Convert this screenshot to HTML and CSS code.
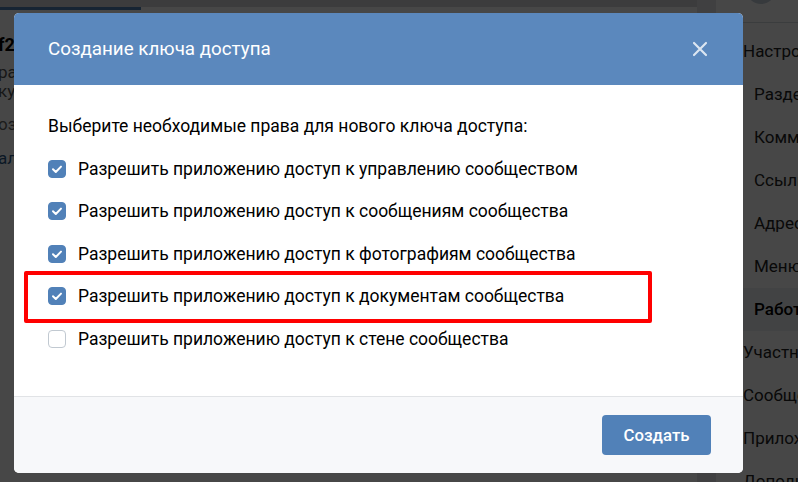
FILE: index.html
```html
<!DOCTYPE html>
<html lang="ru">
<head>
<meta charset="utf-8">
<title>Создание ключа доступа</title>
<link rel="stylesheet" href="styles.css">
</head>
<body>
<div class="page">
  <div class="main">
    <div class="main-top"></div>
    <div class="main-card">
      <div class="tab-line"></div>
      <div class="key-title">f2a6c1</div>
      <div class="key-desc">разрешено: управление, сообщения,<br>куда угодно</div>
      <div class="key-date">оздан 12 марта</div>
      <div class="key-link">алить</div>
    </div>
  </div>
  <div class="side">
    <div class="side-head"><div class="avatar"></div></div>
    <div class="menu">
      <div class="menu-item">Настройки</div>
      <div class="menu-item sub">Разделы</div>
      <div class="menu-item sub">Комментарии</div>
      <div class="menu-item sub">Ссылки</div>
      <div class="menu-item sub">Адреса</div>
      <div class="menu-item sub">Меню</div>
      <div class="menu-item sub active">Работа с API</div>
      <div class="menu-item">Участники</div>
      <div class="menu-item">Сообщения</div>
      <div class="menu-item">Приложения</div>
      <div class="menu-item">Дополнительно</div>
    </div>
  </div>
</div>
<div class="overlay"></div>
<div class="modal">
  <div class="modal-header">
    <div class="modal-title">Создание ключа доступа</div>
    <svg class="close" width="16" height="16" viewBox="0 0 16 16"><path d="M2 2 L14 14 M14 2 L2 14" stroke="currentColor" stroke-width="2.2" stroke-linecap="round"/></svg>
  </div>
  <div class="modal-body">
    <div class="intro">Выберите необходимые права для нового ключа доступа:</div>
    <div class="row"><span class="cb on"><svg width="18" height="18" viewBox="0 0 18 18"><path d="M5 9.3 L7.8 12 L13 6.6" fill="none" stroke="#fff" stroke-width="2" stroke-linecap="round" stroke-linejoin="round"/></svg></span>Разрешить приложению доступ к управлению сообществом</div>
    <div class="row"><span class="cb on"><svg width="18" height="18" viewBox="0 0 18 18"><path d="M5 9.3 L7.8 12 L13 6.6" fill="none" stroke="#fff" stroke-width="2" stroke-linecap="round" stroke-linejoin="round"/></svg></span>Разрешить приложению доступ к сообщениям сообщества</div>
    <div class="row"><span class="cb on"><svg width="18" height="18" viewBox="0 0 18 18"><path d="M5 9.3 L7.8 12 L13 6.6" fill="none" stroke="#fff" stroke-width="2" stroke-linecap="round" stroke-linejoin="round"/></svg></span>Разрешить приложению доступ к фотографиям сообщества</div>
    <div class="row marked"><span class="cb on"><svg width="18" height="18" viewBox="0 0 18 18"><path d="M5 9.3 L7.8 12 L13 6.6" fill="none" stroke="#fff" stroke-width="2" stroke-linecap="round" stroke-linejoin="round"/></svg></span>Разрешить приложению доступ к документам сообщества<span class="highlight"></span></div>
    <div class="row"><span class="cb"></span>Разрешить приложению доступ к стене сообщества</div>
  </div>
  <div class="modal-footer">
    <button class="btn">Создать</button>
  </div>
</div>
</body>
</html>
```
FILE: styles.css
```css
* { box-sizing: border-box; }
html, body { margin: 0; padding: 0; }
body {
  width: 798px;
  height: 482px;
  overflow: hidden;
  position: relative;
  font-family: Roboto, "Noto Sans", "Liberation Sans", sans-serif;
  background: #e4e6ea;
}
.page {
  display: flex;
  gap: 19px;
  height: 482px;
}
.main {
  width: 697px;
  flex: none;
  display: flex;
  flex-direction: column;
  overflow: hidden;
}
.main-top { height: 7px; background: #d6d8dc; }
.main-card {
  flex: 1;
  background: #fff;
  margin-left: -2px;
}
.tab-line { width: 143px; height: 3px; background: #5181b8; }
.key-title {
  margin-top: 25px;
  font-size: 18px;
  font-weight: 700;
  color: #000;
  line-height: 20px;
}
.key-desc {
  margin-top: 8px;
  font-size: 17px;
  line-height: 19px;
  color: #555;
}
.key-date {
  margin-top: 13px;
  font-size: 17px;
  line-height: 20px;
  color: #666;
}
.key-link {
  margin-top: 14px;
  font-size: 17px;
  line-height: 20px;
  color: #2a5885;
}
.side {
  flex: 1;
  min-width: 0;
  overflow: hidden;
  background: #fff;
}
.side-head {
  height: 23px;
  border-bottom: 1px solid #d3d9de;
  position: relative;
}
.avatar {
  position: absolute;
  left: 30px;
  top: -26px;
  width: 30px;
  height: 30px;
  border-radius: 50%;
  background: #c5d0db;
}
.menu { padding-top: 7px; }
.menu-item {
  height: 43px;
  line-height: 43px;
  font-size: 17px;
  color: #222;
  padding-left: 27px;
  white-space: nowrap;
}
.menu-item.sub { padding-left: 38px; }
.menu-item.active { background: #eef0f3; color: #000; font-weight: 500; }
.overlay {
  position: absolute;
  inset: 0;
  background: rgba(0, 0, 0, 0.72);
}
.modal {
  position: absolute;
  left: 14px;
  top: 13px;
  width: 729px;
  height: 460px;
  background: #fff;
  border-radius: 5px;
  overflow: hidden;
  display: flex;
  flex-direction: column;
}
.modal-header {
  height: 72px;
  background: #5b88bd;
  display: flex;
  align-items: center;
  justify-content: space-between;
  padding: 0 35px 0 34px;
}
.modal-title {
  color: #fff;
  font-size: 18.8px;
  line-height: 22px;
}
.close { color: rgba(255, 255, 255, 0.78); display: block; }
.modal-body {
  flex: 1;
  padding: 20px 34px 0;
}
.intro {
  font-size: 17.5px;
  line-height: 42.5px;
  color: #000;
}
.row {
  position: relative;
  display: flex;
  align-items: center;
  gap: 12px;
  height: 42.5px;
  font-size: 17.5px;
  color: #000;
}
.cb {
  width: 18px;
  height: 18px;
  border-radius: 4px;
  border: 1px solid #c1c9d1;
  background: #fff;
  flex: none;
  display: block;
}
.cb.on { background: #5181b8; border-color: #5181b8; }
.cb svg { display: block; margin: -1px; }
.highlight {
  position: absolute;
  left: -24px;
  top: -4px;
  width: 628px;
  height: 52px;
  border: 4px solid #ff0000;
  border-radius: 2px;
}
.modal-footer {
  height: 77px;
  border-top: 1px solid #e1e3e6;
  background: #f7f8fa;
  display: flex;
  align-items: center;
  justify-content: flex-end;
  padding: 0 32px 1px 0;
}
.btn {
  width: 109px;
  height: 40px;
  border: none;
  border-radius: 4px;
  background: #5181b8;
  color: #fff;
  font-family: inherit;
  font-size: 16.8px;
  font-weight: 500;
}
```
